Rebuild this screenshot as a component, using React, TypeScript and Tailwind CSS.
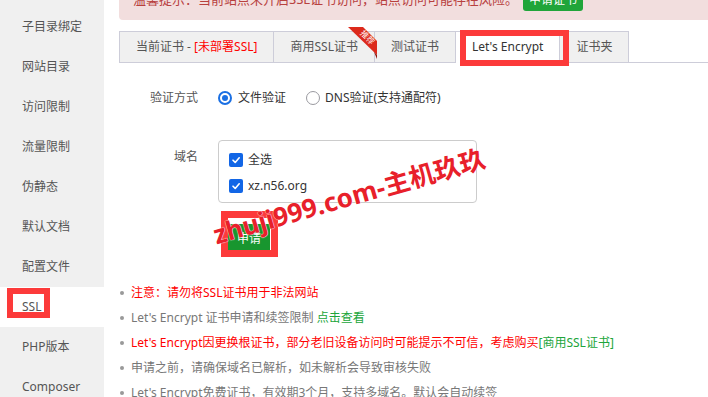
const sideItems = ["子目录绑定", "网站目录", "访问限制", "流量限制", "伪静态", "默认文档", "配置文件", "SSL", "PHP版本", "Composer"];

function Radio({ checked }: { checked?: boolean }) {
  if (checked) {
    return (
      <span className="flex h-[14px] w-[14px] shrink-0 items-center justify-center rounded-full border-[2px] border-[#1a6fe3] bg-white">
        <span className="h-[6px] w-[6px] rounded-full bg-[#1a6fe3]" />
      </span>
    );
  }
  return <span className="block h-[14px] w-[14px] shrink-0 rounded-full border-[1.5px] border-[#9a9aa0] bg-white" />;
}

function Checkbox() {
  return (
    <span className="flex h-[14px] w-[14px] shrink-0 items-center justify-center rounded-[2px] bg-[#1266e6]">
      <svg width="10" height="10" viewBox="0 0 10 10">
        <path d="M2 5.2 L4.2 7.4 L8.2 2.8" fill="none" stroke="#fff" strokeWidth="1.6" strokeLinecap="round" strokeLinejoin="round" />
      </svg>
    </span>
  );
}

export default function App() {
  return (
    <div className="relative h-[397px] w-[708px] overflow-hidden bg-white font-['Noto_Sans','Noto_Sans_CJK_SC',sans-serif] text-[12px]">
      <div className="flex">
        {/* sidebar */}
        <div className="h-[397px] w-[104px] shrink-0 bg-[#f0f0f0] pt-[7px]">
          {sideItems.map((s) => (
            <div key={s} className={`h-[40px] pl-[22px] leading-[40px] text-[#555] ${s === "SSL" ? "bg-white" : ""}`}>
              {s}
            </div>
          ))}
        </div>

        <div className="min-w-0 flex-1 pl-[15px]">
          {/* alert */}
          <div className="-mt-[20px] flex h-[40px] w-[640px] items-center rounded-[4px] bg-[#f2dede] pl-[14px] text-[13px] text-[#b8413f] whitespace-nowrap">
            <span>温馨提示：当前站点未开启SSL证书访问，站点访问可能存在风险。</span>
            <span className="ml-[5px] h-[22px] rounded-[3px] bg-[#20a53a] px-[6px] text-[12px] leading-[22px] text-white">申请证书</span>
          </div>

          {/* tabs */}
          <div className="mt-[11px] flex border-b border-[#cdcdd9] text-[#555] whitespace-nowrap">
            <div className="h-[31px] border-l border-r border-t border-[#cdcdd9] bg-[#f0f0f0] px-[16px] leading-[30px]">
              当前证书 - <span className="text-[#f00]">[未部署SSL]</span>
            </div>
            <div className="relative h-[31px] border-r border-t border-[#cdcdd9] bg-[#f0f0f0] px-[16px] leading-[30px]">
              商用SSL证书
              <svg className="absolute left-[74px] top-[-5px]" width="30" height="34" viewBox="0 0 30 34">
                <polygon points="0,0 15,0 29,14 29,28" fill="#dc2a1c" />
                <polygon points="26,25 29,28 29,32" fill="#8e160e" />
                <text x="0" y="0" fill="#fff" fontSize="8" textAnchor="middle" transform="translate(17.5 12.5) rotate(45)">推荐</text>
              </svg>
            </div>
            <div className="h-[31px] border-r border-t border-[#cdcdd9] bg-[#f0f0f0] px-[16px] leading-[30px]">测试证书</div>
            <div className="-mb-px h-[32px] border-r border-t border-[#cdcdd9] bg-white px-[16px] leading-[30px] text-[#333]">Let's Encrypt</div>
            <div className="h-[31px] border-r border-t border-[#cdcdd9] bg-[#f0f0f0] px-[16px] leading-[30px]">证书夹</div>
          </div>

          {/* verify method */}
          <div className="mt-[25px] flex h-[20px] items-center">
            <div className="w-[79px] text-right text-[#555]">验证方式</div>
            <div className="ml-[20px] flex items-center text-[#333]">
              <Radio checked />
              <span className="ml-[6px]">文件验证</span>
              <span className="ml-[20px]">
                <Radio />
              </span>
              <span className="ml-[5px]">DNS验证(支持通配符)</span>
            </div>
          </div>

          {/* domains */}
          <div className="mt-[32px] flex items-start">
            <div className="mt-[7px] w-[79px] text-right leading-[20px] text-[#555]">域名</div>
            <div className="ml-[20px] h-[63px] w-[259px] rounded-[4px] border border-[#ccc] pl-[10px] pt-[6px] text-[#333]">
              <div className="flex h-[26px] items-center gap-[5px]">
                <Checkbox />
                <span>全选</span>
              </div>
              <div className="flex h-[26px] items-center gap-[5px]">
                <Checkbox />
                <span>xz.n56.org</span>
              </div>
            </div>
          </div>

          {/* submit */}
          <div className="ml-[109px] mt-[21px] flex h-[28px] w-[42px] items-center justify-center bg-[#18962f] pt-[2px] text-white">申请</div>

          {/* notes */}
          <ul className="mt-[28px] whitespace-nowrap">
            <li className="flex h-[25px] items-center text-[#f00]">
              <span className="ml-[1px] mr-[7px] h-[4px] w-[4px] rounded-full bg-[#999]" />
              注意：请勿将SSL证书用于非法网站
            </li>
            <li className="flex h-[25px] items-center text-[#777]">
              <span className="ml-[1px] mr-[7px] h-[4px] w-[4px] rounded-full bg-[#999]" />
              Let's Encrypt 证书申请和续签限制&nbsp;<span className="text-[#20a53a]">点击查看</span>
            </li>
            <li className="flex h-[25px] items-center text-[#f00]">
              <span className="ml-[1px] mr-[7px] h-[4px] w-[4px] rounded-full bg-[#999]" />
              Let's Encrypt因更换根证书，部分老旧设备访问时可能提示不可信，考虑购买<span className="text-[#20a53a]">[商用SSL证书]</span>
            </li>
            <li className="flex h-[25px] items-center text-[#777]">
              <span className="ml-[1px] mr-[7px] h-[4px] w-[4px] rounded-full bg-[#999]" />
              申请之前，请确保域名已解析，如未解析会导致审核失败
            </li>
            <li className="flex h-[25px] items-center text-[#777]">
              <span className="ml-[1px] mr-[7px] h-[4px] w-[4px] rounded-full bg-[#999]" />
              Let's Encrypt免费证书，有效期3个月，支持多域名。默认会自动续签
            </li>
          </ul>
        </div>
      </div>

      {/* annotation boxes */}
      <div className="pointer-events-none absolute left-[7px] top-[288px] h-[30px] w-[43px] border-[6px] border-[#fc3a3a]" />
      <div className="pointer-events-none absolute left-[460px] top-[30px] h-[36px] w-[109px] border-[6px] border-[#fc3a3a]" />
      <div className="pointer-events-none absolute left-[221px] top-[211px] h-[46px] w-[57px] border-[7px] border-[#fc3a3a]" />

      {/* watermark */}
      <div className="pointer-events-none absolute left-[349px] top-[196px] -translate-x-1/2 -translate-y-1/2 -rotate-[16deg] whitespace-nowrap text-[26px] font-bold leading-none text-[#e8202a] [text-shadow:0_0_1px_#fff,0_0_1px_#fff]">
        zhuji999.com-主机玖玖
      </div>
    </div>
  );
}
